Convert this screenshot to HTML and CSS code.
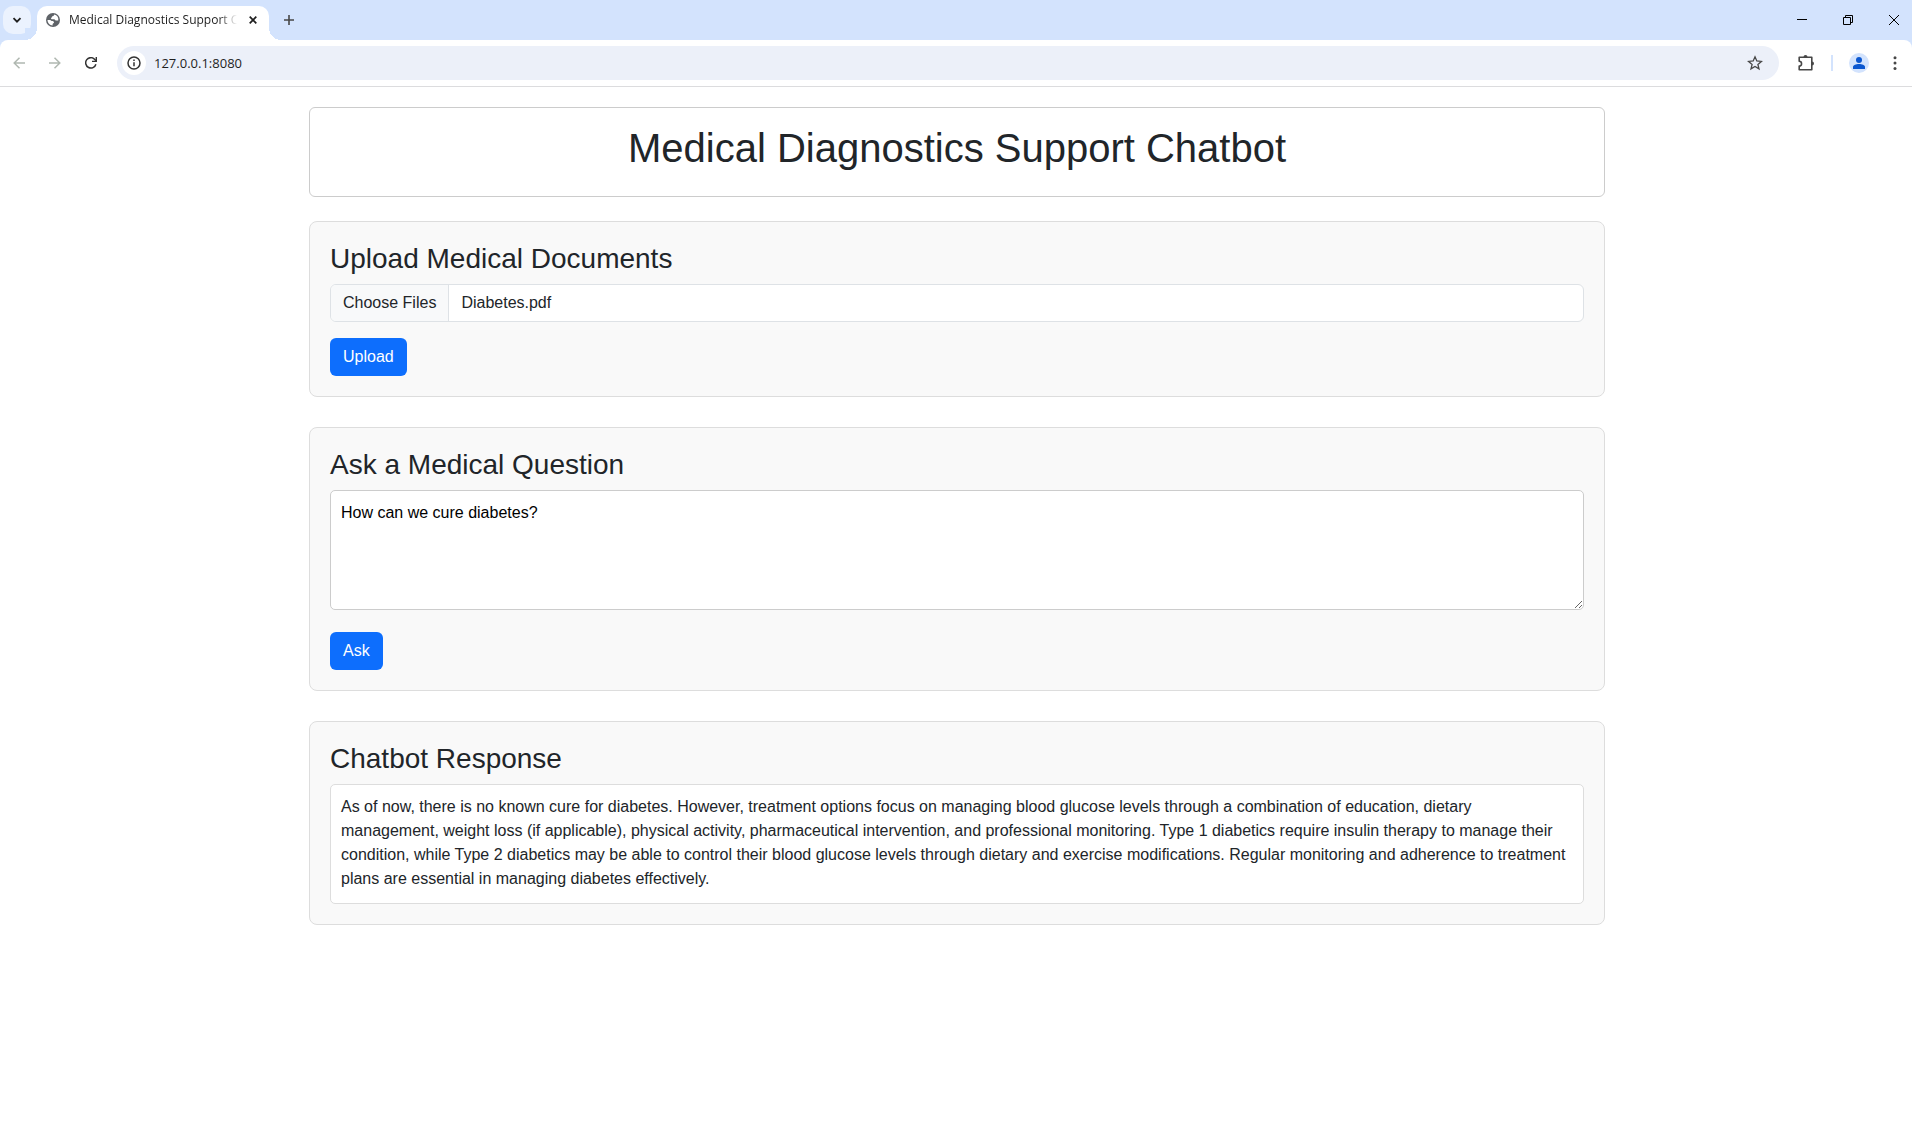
FILE: index.html
```html
<!DOCTYPE html>
<html lang="en">
<head>
<meta charset="utf-8">
<meta name="viewport" content="width=device-width, initial-scale=1">
<title>Medical Diagnostics Support Chatbot</title>
<link rel="stylesheet" href="styles.css">
</head>
<body>
<header class="browser">
  <div class="tab-strip">
    <button class="tab-search" type="button" aria-label="Search tabs">
      <svg width="10" height="10" viewBox="0 0 10 10"><path d="M1.500 3.200 5 6.700l3.500-3.500" fill="none" stroke="#1f1f1f" stroke-width="1.800"/></svg>
    </button>
    <div class="tab">
      <svg class="tab-icon" width="14" height="14" viewBox="0 0 14 14"><circle cx="7" cy="7" r="7" fill="#5f6368"/><path d="M8.200 1.600c-.2 1.200-.7 1.500-1.700 1.700-.6.100-.4 1.300-1.200 1.500-.6.200-.2 1.400.5 1.400h2.400c1 0 .8 1.300 1.600 1.300h2.500A5.500 5.500 0 0 0 8.200 1.600zM1.500 7c0 3 2.300 5.400 5.100 5.500v-1.300c.1-.8 1.400-.7 1.400-1.600 0-1-.7-1.600-1.800-1.600C5 8 5 6.900 4 6.900z" fill="#fff"/></svg>
      <span class="tab-title">Medical Diagnostics Support Chatbot</span>
      <button class="tab-close" type="button" aria-label="Close tab">
        <svg width="8" height="8" viewBox="0 0 8 8"><path d="m.7.700 6.600 6.600M7.300.7.700 7.300" stroke="#1f1f1f" stroke-width="1.700"/></svg>
      </button>
    </div>
    <button class="new-tab" type="button" aria-label="New tab">
      <svg width="10" height="10" viewBox="0 0 10 10"><path d="M5 0v10M0 5h10" stroke="#474747" stroke-width="1.600"/></svg>
    </button>
    <div class="window-controls">
      <button class="window-button" type="button" aria-label="Minimize">
        <svg width="10" height="10" viewBox="0 0 10 10"><path d="M0 4.500h10" stroke="#000"/></svg>
      </button>
      <button class="window-button" type="button" aria-label="Restore">
        <svg width="10" height="10" viewBox="0 0 10 10"><path d="M.5 2.500h7v7h-7zM2.500 2.500v-2h7v7h-2" fill="none" stroke="#000"/></svg>
      </button>
      <button class="window-button" type="button" aria-label="Close">
        <svg width="10" height="10" viewBox="0 0 10 10"><path d="m0 0 10 10M10 0 0 10" stroke="#000"/></svg>
      </button>
    </div>
  </div>
  <div class="toolbar">
    <div class="nav-buttons">
      <button class="nav-button" type="button" aria-label="Back" disabled>
        <svg width="12" height="12" viewBox="0 0 12 12"><path d="M12 6H1.200M6.500.7 1.200 6l5.300 5.300" fill="none" stroke="#b0b8b1" stroke-width="1.500"/></svg>
      </button>
      <button class="nav-button" type="button" aria-label="Forward" disabled>
        <svg width="12" height="12" viewBox="0 0 12 12"><path d="M0 6h10.800M5.500.7 10.800 6l-5.300 5.300" fill="none" stroke="#b0b8b1" stroke-width="1.500"/></svg>
      </button>
      <button class="nav-button" type="button" aria-label="Reload">
        <svg width="12" height="12" viewBox="0 0 12 12"><path d="M10.900 7.200A5.200 5.200 0 1 1 9.800 2.400L11 3.800" fill="none" stroke="#333" stroke-width="1.500"/><path d="M11.300 0v4.400H7" fill="none" stroke="#333" stroke-width="1.400"/></svg>
      </button>
    </div>
    <div class="omnibox">
      <button class="site-info" type="button" aria-label="View site information">
        <svg width="14" height="14" viewBox="0 0 14 14"><circle cx="7" cy="7" r="6" fill="none" stroke="#333" stroke-width="1.500"/><path d="M7 6.200v4M7 3.500v1.500" stroke="#333" stroke-width="1.500"/></svg>
      </button>
      <input class="address" type="text" value="127.0.0.1:8080" aria-label="Address and search bar">
      <button class="bookmark" type="button" aria-label="Bookmark this tab">
        <svg width="16" height="16" viewBox="0 0 16 16"><path d="m8 1.800 1.800 4.200 4.600.4-3.500 3 1.100 4.500L8 11.500l-4 2.400 1.100-4.500-3.500-3L6.200 6z" fill="none" stroke="#474747" stroke-width="1.300"/></svg>
      </button>
    </div>
    <button class="tool-button" type="button" aria-label="Extensions">
      <svg width="18" height="18" viewBox="0 0 18 18"><path d="M2.200 3.200h12.600v12.600H2.200v-3.800a2.300 2.300 0 0 0 0-4.700z" fill="none" stroke="#474747" stroke-width="1.600" stroke-linejoin="round"/><path d="M6.500 3a2 2 0 0 1 4 0zM15 7.500a2 2 0 0 1 0 4z" fill="#474747"/></svg>
    </button>
    <span class="divider"></span>
    <button class="avatar" type="button" aria-label="Profile">
      <svg width="12" height="12" viewBox="0 0 12 12"><circle cx="6" cy="3" r="3" fill="#0b57d0"/><path d="M0 12v-2c0-2 3-3 6-3s6 1 6 3v2z" fill="#0b57d0"/></svg>
    </button>
    <button class="menu" type="button" aria-label="Menu">
      <svg width="4" height="14" viewBox="0 0 4 14"><circle cx="2" cy="1.800" r="1.500" fill="#474747"/><circle cx="2" cy="7.100" r="1.500" fill="#474747"/><circle cx="2" cy="12.400" r="1.500" fill="#474747"/></svg>
    </button>
  </div>
</header>
<main class="page">
  <div class="banner">
    <h1 class="banner-title">Medical Diagnostics Support Chatbot</h1>
  </div>
  <form class="panel">
    <h2 class="panel-title"><label for="documents">Upload Medical Documents</label></h2>
    <input class="file-input" id="documents" type="file" multiple>
    <button class="button" type="button">Upload</button>
  </form>
  <form class="panel">
    <h2 class="panel-title"><label for="question">Ask a Medical Question</label></h2>
    <textarea class="question" id="question">How can we cure diabetes?</textarea>
    <button class="button" type="button">Ask</button>
  </form>
  <section class="panel">
    <h2 class="panel-title">Chatbot Response</h2>
    <div class="response">As of now, there is no known cure for diabetes. However, treatment options focus on managing blood glucose levels through a combination of education, dietary management, weight loss (if applicable), physical activity, pharmaceutical intervention, and professional monitoring. Type 1 diabetics require insulin therapy to manage their condition, while Type 2 diabetics may be able to control their blood glucose levels through dietary and exercise modifications. Regular monitoring and adherence to treatment plans are essential in managing diabetes effectively.</div>
  </section>
</main>
<script src="app.js"></script>
</body>
</html>
```

FILE: styles.css
```css
* {
  box-sizing: border-box;
}

body {
  margin: 0;
  background: #fff;
  color: #212529;
  font: 16px/24px "Liberation Sans", Arial, sans-serif;
}

button {
  display: flex;
  align-items: center;
  justify-content: center;
  flex: none;
  margin: 0;
  padding: 0;
  border: 0;
  background: none;
  font: inherit;
}

svg {
  display: block;
  flex: none;
}

/* Browser window */
.browser {
  border-bottom: 1px solid #dcdcde;
  background: #d3e3fd;
  font-family: "Open Sans", "Noto Sans", sans-serif;
}

.tab-strip {
  display: flex;
  align-items: center;
  height: 40px;
  padding-left: 3px;
}

.tab-search {
  width: 28px;
  height: 28px;
  border-radius: 10px;
  background: #ebf2fe;
}

.tab {
  position: relative;
  display: flex;
  align-items: center;
  align-self: flex-end;
  width: 232px;
  height: 34px;
  margin-left: 6px;
  padding: 0 6px 6px 9px;
  border-radius: 10px 10px 0 0;
  background: #fff;
}

.tab::before,
.tab::after {
  content: "";
  position: absolute;
  bottom: 0;
  width: 12px;
  height: 12px;
}

.tab::before {
  right: 100%;
  background: radial-gradient(circle at 0 0, #d3e3fd 12px, #fff 12px);
}

.tab::after {
  left: 100%;
  background: radial-gradient(circle at 100% 0, #d3e3fd 12px, #fff 12px);
}

.tab-title {
  flex: 1;
  margin-left: 9px;
  overflow: hidden;
  color: #1f1f1f;
  font-size: 12px;
  white-space: nowrap;
  mask-image: linear-gradient(to left, transparent, #000 18px);
}

.tab-close {
  width: 20px;
  height: 20px;
  margin-left: 6px;
}

.new-tab {
  width: 28px;
  height: 28px;
  margin-left: 6px;
}

.window-controls {
  display: flex;
  align-self: stretch;
  margin-left: auto;
}

.window-button {
  width: 46px;
}

.window-controls .window-button:last-child {
  width: 41px;
  padding-left: 5px;
}

.toolbar {
  display: flex;
  align-items: center;
  height: 46px;
  padding: 0 10px 0 1px;
  border-radius: 8px 8px 0 0;
  background: #fff;
}

.nav-buttons {
  display: flex;
}

.nav-button {
  width: 36px;
  height: 36px;
}

.omnibox {
  display: flex;
  align-items: center;
  flex: 1;
  height: 34px;
  margin: 0 10px 0 8px;
  padding: 0 12px 0 5px;
  border-radius: 17px;
  background: #ecf0f9;
}

.site-info {
  width: 24px;
  height: 24px;
  border-radius: 12px;
  background: #fff;
}

.address {
  flex: 1;
  min-width: 0;
  margin: 0 8px;
  padding: 0;
  border: 0;
  outline: 0;
  background: none;
  color: #1f1f1f;
  font: inherit;
  font-size: 13px;
}

.bookmark {
  width: 24px;
  height: 24px;
}

.tool-button {
  width: 34px;
  height: 34px;
}

.divider {
  width: 2px;
  height: 16px;
  margin: 0 16px 0 8px;
  background: #d3e3fd;
}

.avatar {
  width: 20px;
  height: 20px;
  border-radius: 10px;
  background: #d3e3fd;
}

.menu {
  width: 14px;
  height: 34px;
  margin-left: 19px;
}

/* Chatbot page */
.page {
  max-width: 1320px;
  margin: 0 auto;
  padding: 20px 11px 20px 13px;
}

.banner {
  margin-bottom: 24px;
  padding: 16px 16px 24px;
  border: 1px solid #ccc;
  border-radius: 6px;
  text-align: center;
}

.banner-title {
  margin: 0;
  font-size: 40px;
  font-weight: 500;
  line-height: 48px;
}

.panel {
  margin-bottom: 30px;
  padding: 20px;
  border: 1px solid #ddd;
  border-radius: 8px;
  background: #f9f9f9;
}

.panel-title {
  margin: 0 0 8px;
  font-size: 28px;
  font-weight: 500;
  line-height: 34px;
}

.file-input {
  display: block;
  width: 100%;
  height: 38px;
  margin-bottom: 16px;
  padding: 6px 12px;
  overflow: hidden;
  border: 1px solid #dee2e6;
  border-radius: 6px;
  background: #fff;
  color: #212529;
  font: inherit;
}

.file-input::file-selector-button {
  margin: -6px 12px -6px -12px;
  padding: 6px 12px;
  border: 0 solid #dee2e6;
  border-right-width: 1px;
  background: #f8f9fa;
  color: #212529;
  font: inherit;
}

.question {
  display: block;
  width: 100%;
  height: 120px;
  margin-bottom: 22px;
  padding: 10px;
  border: 1px solid #ccc;
  border-radius: 5px;
  background: #fff;
  color: #000;
  font: inherit;
}

.button {
  padding: 7px 13px;
  border-radius: 6px;
  background: #0d6efd;
  color: #fff;
}

.response {
  min-height: 120px;
  padding: 10px;
  border: 1px solid #ddd;
  border-radius: 5px;
  background: #fff;
}
```

FILE: app.js
```js
// Preselect the sample document in the upload field.
const selection = new DataTransfer();
selection.items.add(new File([""], "Diabetes.pdf", { type: "application/pdf" }));
document.getElementById("documents").files = selection.files;
```
